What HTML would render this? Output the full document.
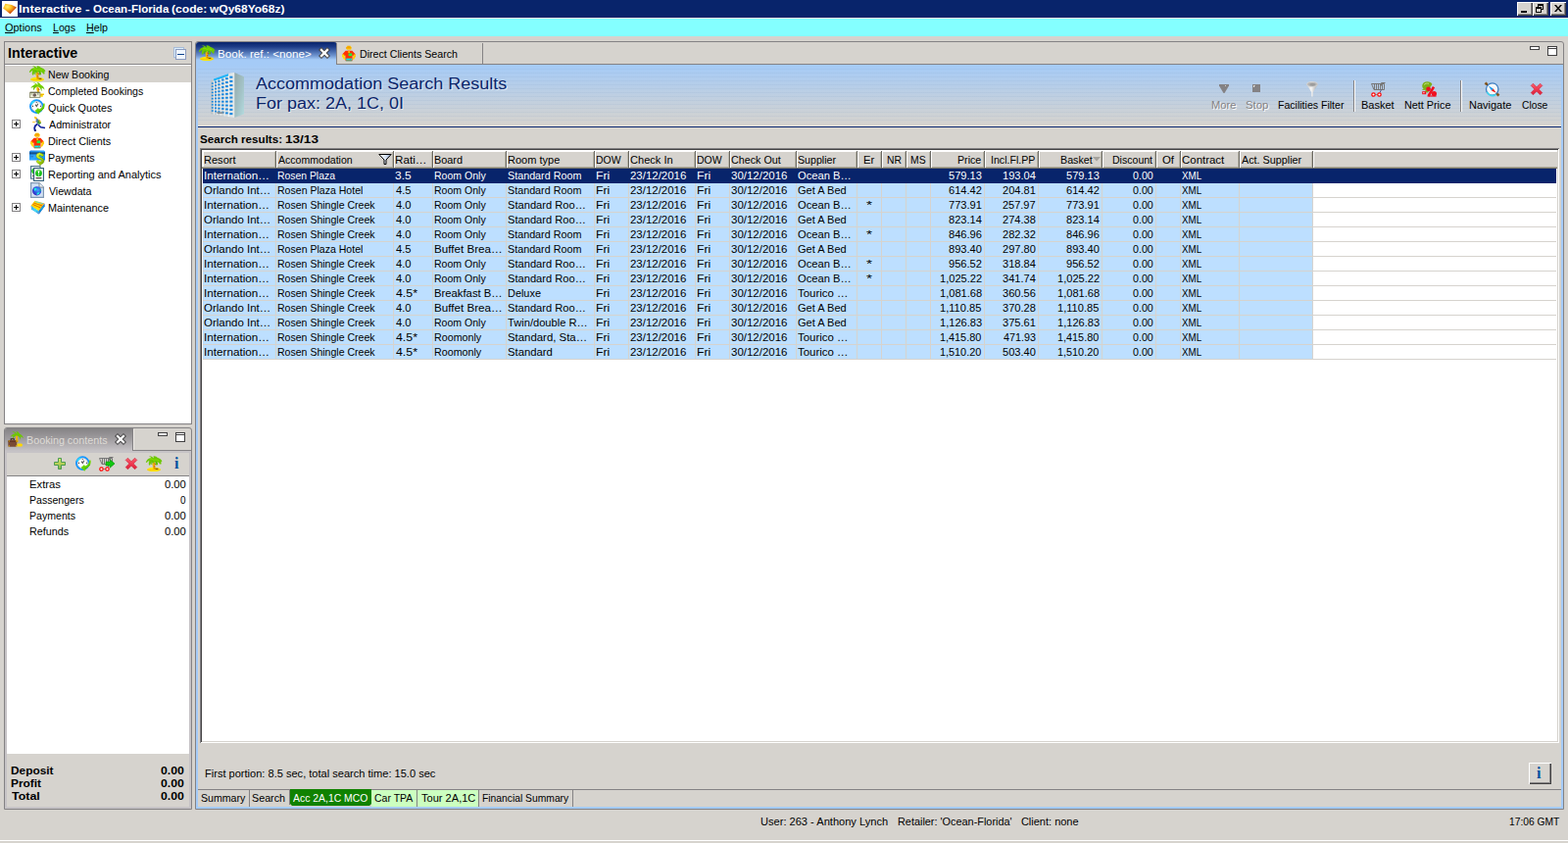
<!DOCTYPE html>
<html lang="en">
<head>
<meta charset="utf-8">
<title>Interactive - Ocean-Florida</title>
<style>
html,body{margin:0;padding:0;}
body{width:1600px;height:860px;overflow:hidden;background:#D6D3CE;font-family:"Liberation Sans",sans-serif;font-size:11px;line-height:13px;color:#000;}
#app{position:relative;width:1600px;height:860px;overflow:hidden;background:#D6D3CE;}
#app div,#app span.t,#app svg{position:absolute;}
#app svg{overflow:visible;}
.t{white-space:pre;transform-origin:0 0;}
.t u{text-decoration:underline;text-underline-offset:1px;}

</style>
</head>
<body>
<div id="app">
<div style="left:0px;top:0px;width:1600px;height:18px;background:#08246B;"></div>
<div style="left:2px;top:1px;width:16px;height:16px;background:#fff;"></div>
<svg style="left:2px;top:1px;" width="16" height="16" viewBox="0 0 16 16"><defs><radialGradient id="ggem" cx=".32" cy=".3" r=".8"><stop offset="0" stop-color="#FFF070"/><stop offset=".35" stop-color="#FFC020"/><stop offset=".7" stop-color="#D86010"/><stop offset="1" stop-color="#B03800"/></radialGradient></defs><path d="M3.400 2.800L10 4l5 2.600-6.600 6.600L1.200 7.400z" fill="url(#ggem)"/></svg>
<span class="t" style="left:18.81px;top:3px;font-weight:bold;transform:scaleX(1.170);color:#fff;">Interactive </span>
<span class="t" style="left:86.70px;top:3px;font-weight:bold;transform:scaleX(1.270);color:#fff;">- </span>
<span class="t" style="left:94.74px;top:3px;font-weight:bold;transform:scaleX(1.045);color:#fff;">Ocean-Florida </span>
<span class="t" style="left:174.87px;top:3px;font-weight:bold;transform:scaleX(1.100);color:#fff;">(code: </span>
<span class="t" style="left:213.89px;top:3px;font-weight:bold;transform:scaleX(1.090);color:#fff;">wQy68Yo68z)</span>
<div style="left:1548px;top:2px;width:16px;height:14px;background:#D6D3CE;box-shadow:inset 1px 1px 0 #fff,inset -1px -1px 0 #424142,inset -2px -2px 0 #848284;"></div>
<div style="left:1564px;top:2px;width:16px;height:14px;background:#D6D3CE;box-shadow:inset 1px 1px 0 #fff,inset -1px -1px 0 #424142,inset -2px -2px 0 #848284;"></div>
<div style="left:1582px;top:2px;width:16px;height:14px;background:#D6D3CE;box-shadow:inset 1px 1px 0 #fff,inset -1px -1px 0 #424142,inset -2px -2px 0 #848284;"></div>
<div style="left:1552px;top:11px;width:6px;height:2px;background:#000;"></div>
<div style="left:1569px;top:4px;width:6px;height:2px;background:#000;"></div>
<div style="left:1574px;top:4px;width:1px;height:6px;background:#000;"></div>
<div style="left:1569px;top:4px;width:1px;height:3px;background:#000;"></div>
<div style="left:1573px;top:9px;width:2px;height:1px;background:#000;"></div>
<div style="left:1567px;top:7px;width:6px;height:2px;background:#000;"></div>
<div style="left:1567px;top:7px;width:1px;height:6px;background:#000;"></div>
<div style="left:1572px;top:7px;width:1px;height:6px;background:#000;"></div>
<div style="left:1567px;top:12px;width:6px;height:1px;background:#000;"></div>
<svg style="left:1586px;top:5px;" width="8" height="7" viewBox="0 0 8 7"><path d="M0 0h2l2 2.500 2-2.500h2L5 3.500 8 7H6L4 4.500 2 7H0l3-3.500z" fill="#000"/></svg>
<div style="left:0px;top:18px;width:1600px;height:1px;background:#E7E3DE;"></div>
<div style="left:0px;top:19px;width:1600px;height:18px;background:#84FFFF;"></div>
<span class="t" style="left:4.90px;top:22px;transform:scaleX(0.995);"><u>O</u>ptions</span>
<span class="t" style="left:53.97px;top:22px;transform:scaleX(0.966);"><u>L</u>ogs</span>
<span class="t" style="left:88.08px;top:22px;transform:scaleX(0.974);"><u>H</u>elp</span>
<div style="left:4px;top:42px;width:192px;height:391px;border:1px solid #848284;box-sizing:border-box;"></div>
<div style="left:5px;top:66px;width:190px;height:366px;background:#fff;"></div>
<div style="left:5px;top:65px;width:190px;height:1px;background:#848284;"></div>
<div style="left:5px;top:67px;width:190px;height:17px;background:#D6D3CE;"></div>
<span class="t" style="left:7.94px;top:46px;font-size:14px;line-height:16px;font-weight:bold;transform:scaleX(1.018);">Interactive</span>
<div style="left:177px;top:48px;width:11px;height:11px;background:#DCEEFC;border:1px solid #A8BCD8;box-sizing:border-box;"></div>
<div style="left:179px;top:50px;width:11px;height:11px;background:#F0F6FE;border:1px solid #8C9CC0;box-sizing:border-box;"></div>
<div style="left:181px;top:55px;width:7px;height:1px;background:#08418C;"></div>
<span class="t" style="left:48.98px;top:70px;transform:scaleX(0.962);">New Booking</span>
<svg style="left:30px;top:67px;" width="16" height="16" viewBox="0 0 16 16"><ellipse cx="8" cy="13.9" rx="7" ry="2.1" fill="#FFE600"/>
<path d="M1.6 14.4h12.8" stroke="#F6C800" stroke-width="1" fill="none"/>
<path d="M7.9 5.5C7.3 8.2 7.9 10.6 8.5 13.6" stroke="#F2B400" stroke-width="2.3" fill="none"/>
<path d="M8.6 7.6l1.2 1.6M8 10.4l1.3.6M8.4 12.6l1 .4" stroke="#C85A00" stroke-width="1.1" fill="none"/>
<path d="M9.6 13.3h2.8" stroke="#6A3A00" stroke-width="1" fill="none"/>
<path d="M7.600 2.600C6.400.8 4.400 0 3.200.4c1 .4 1.800 1 2.400 1.800C3.400 1.800 1 3.200-.2 6.600c.4.400 1 .4 1.400 0 .6-.8 1.400-1.400 2.200-1.600-.6 1.200-.8 2.800-.4 4.400.6.400 1.200.2 1.400-.4.400-1.400 1-2.400 2-3.200l.2 1.400 1.600.2.400-1.600c.8.600 1.400 1.800 1.600 3.400.4.600 1.200.600 1.600-.2.200-1 .200-2-.2-3 1 .4 1.800 1.200 2.600 2.400.6.400 1.200.2 1.400-.4 0-.8-.2-1.400-.6-1.800h1c.4-.4.400-1 0-1.400-1-1.400-2.400-2.400-4-2.800C11 1 9.400 0 7.800.2c-.4.400-.4.800 0 1.200z" fill="#6CC800"/>
<path d="M4 3.200c1.600-.2 3 .2 4 1.200 1.600-.8 3.400-.6 5 .6" stroke="#8CE000" stroke-width="1" fill="none"/>
<path d="M6.400 5.800c-.6 1-.8 2-.6 3M10 6c.8.800 1.200 1.800 1.200 3" stroke="#48B000" stroke-width="1" fill="none"/></svg>
<span class="t" style="left:48.95px;top:87px;transform:scaleX(0.958);">Completed Bookings</span>
<svg style="left:30px;top:84px;" width="16" height="16" viewBox="0 0 16 16"><g transform="translate(1.2,-0.6) scale(0.92)">
<path d="M7.9 5.5C7.3 8.2 7.9 9.6 8.7 11.6" stroke="#F2B400" stroke-width="2.3" fill="none"/>
<path d="M8.600 7.600l1.200 1.600" stroke="#C85A00" stroke-width="1.300" fill="none"/>
<path d="M8 3.600C6.200 1.200 3.600.4 2.600 1c1.600.4 2.800 1.200 3.600 2.400C3.800 3 1.400 4.600.2 7.200c1.200-.8 2.200-1.200 3.400-1.400C3 6.800 2.800 8.200 3.200 9.600c.6-1.600 1.600-2.800 3-3.600.6-.2 1.200-.4 1.800-.4.800 0 1.600.4 2.200 1 1 1 1.600 2.400 1.800 4 .6-1.400.6-2.800.2-4 1.200.4 2.400 1.200 3.400 2.400C15.200 6.400 13.600 4.400 11.400 3.600 10.400 1.800 8.800.6 7 .4c.8.800 1.200 1.800 1 3.200z" fill="#6CC800"/>
<path d="M4 3.200c1.600-.2 3 .2 4 1.200 1.600-.8 3.400-.6 5 .6" stroke="#8CE000" stroke-width="1" fill="none"/></g>
<path d="M10.400 11.500h4.600v1.500h-1.200v1.800H9.800z" fill="#FFD800"/>
<path d="M11 12.500h3.600" stroke="#E8A800" stroke-width=".8"/>
<rect x=".5" y="10.300" width="10.400" height="5.200" fill="#ECECD8" stroke="#9C9C80" stroke-width="1"/>
<path d="M1 10.300h9.600" stroke="#6E6E50" stroke-width="1.200"/>
<circle cx="5.300" cy="13" r="1.800" fill="#6E5E5A"/>
<path d="M1.600 12h1M8 12h1.400" stroke="#6E7E50" stroke-width="1"/></svg>
<span class="t" style="left:48.92px;top:104px;transform:scaleX(0.980);">Quick Quotes</span>
<svg style="left:30px;top:101px;" width="16" height="16" viewBox="0 0 16 16"><circle cx="7.300" cy="7.600" r="6.300" fill="#fff" stroke="#1496FF" stroke-width="2"/>
<circle cx="7.300" cy="7.600" r="4.900" fill="none" stroke="#D8C8C8" stroke-width=".9"/>
<path d="M5.400 2.100A5.600 5.600 0 0 0 1.900 5.600" stroke="#30D8FF" stroke-width="1.800" fill="none"/>
<path d="M7.300 3.200v.9M7.300 11v.8M3.100 7.400h.9M11 7.400h.8" stroke="#333" stroke-width="1.100"/>
<path d="M6 5.600l1.400 1.900 1.400-2.700" stroke="#555" stroke-width="1.100" fill="none"/>
<path d="M15.500 4.500c.7 3.400-.9 6.400-4 8l-2.300 3.300-3.500-3.700c1.300-1.400 2.300-2.400 3.200-3.200l1 1.700c2.300-.8 4.200-3 4.400-6.200z" fill="#66D400"/>
<path d="M9.300 12.800c2.200-.3 4.300-1.700 5.400-4" stroke="#4AB800" stroke-width="1" fill="none"/></svg>
<span class="t" style="left:49.84px;top:121px;transform:scaleX(0.975);">Administrator</span>
<div style="left:12px;top:122px;width:9px;height:9px;background:#fff;border:1px solid #848284;box-sizing:border-box;"></div>
<div style="left:14px;top:126px;width:5px;height:1px;background:#000;"></div>
<div style="left:16px;top:124px;width:1px;height:5px;background:#000;"></div>
<svg style="left:30px;top:118px;" width="16" height="16" viewBox="0 0 16 16"><path d="M5 .8l2.400.8 1 1.800-1.200.8L5.400 3z" fill="#FFC21E"/>
<path d="M7.400 2.600l2.400 1.600 1.200 3.200-2.400 1.400-2.200-3z" fill="#5E78B0"/>
<path d="M8.600 4.400l2.600 1.200.8 2.200-1.800 1.200-1.800-1.200z" fill="#3E9A2E"/>
<path d="M9.400 3.800l1.400 1.400.4 2" stroke="#F0B820" stroke-width="1.100" fill="none"/>
<path d="M3.200 6.600h2.400l1-.8" stroke="#FFC21E" stroke-width="1" fill="none"/>
<path d="M8.400 8.600L6 10.200l-.8 2.400.4 2.600" stroke="#10209A" stroke-width="1.800" fill="none" stroke-linejoin="round"/>
<path d="M9 9.200l2.600 2.600 4.400.6" stroke="#10209A" stroke-width="1.500" fill="none"/>
<rect x="5" y="14.300" width="2" height="1.700" fill="#0A1480"/></svg>
<span class="t" style="left:48.95px;top:138px;transform:scaleX(0.980);">Direct Clients</span>
<svg style="left:30px;top:135px;" width="16" height="16" viewBox="0 0 16 16"><path d="M6.200.8h3.400l1.200 1.600-.6 2.400H6.400L5 3.600z" fill="#FFC800"/>
<path d="M5.200 2.800h5" stroke="#F09000" stroke-width="1"/>
<path d="M6.600 1.400h2.600" stroke="#F0A000" stroke-width=".9"/>
<rect x="7" y="4.700" width="2" height="1.300" fill="#F0C080"/>
<path d="M4.600 5.800h6.800l3.200 3.400-1.200 2.200-1.800-1v5.400H4.400v-5.400l-1.800 1-1.200-2.200z" fill="#FF3200"/>
<path d="M1.200 9.400l2 .2 1.200 5.200-1.600-.2L1 11.400z" fill="#FFDC00"/>
<path d="M14.800 9.400l-2 .2-1.200 5.200 1.600-.2 1.800-3.200z" fill="#FFC800"/>
<path d="M7.400 6h1.400v2H7.400z" fill="#FFD800"/>
<rect x="7.600" y="8.400" width="3.600" height="2.700" fill="#20F040"/>
<rect x="5.200" y="13.600" width="5.800" height="2" fill="#00F0F0"/>
<path d="M4.800 15.900h6.600" stroke="#5A8A50" stroke-width=".9"/>
<path d="M9.600 13.600v2.200" stroke="#60A080" stroke-width=".8"/></svg>
<span class="t" style="left:48.98px;top:155px;transform:scaleX(0.974);">Payments</span>
<div style="left:12px;top:156px;width:9px;height:9px;background:#fff;border:1px solid #848284;box-sizing:border-box;"></div>
<div style="left:14px;top:160px;width:5px;height:1px;background:#000;"></div>
<div style="left:16px;top:158px;width:1px;height:5px;background:#000;"></div>
<svg style="left:30px;top:152px;" width="16" height="16" viewBox="0 0 16 16"><defs><linearGradient id="gcard" x1="0" y1="0" x2="1" y2="1"><stop offset="0" stop-color="#1E7EE0"/><stop offset=".5" stop-color="#30A8FF"/><stop offset="1" stop-color="#0A8CF0"/></linearGradient>
<linearGradient id="gdol" x1="0" y1="0" x2="1" y2="1"><stop offset="0" stop-color="#F4FF60"/><stop offset=".45" stop-color="#B8E800"/><stop offset="1" stop-color="#6A9A00"/></linearGradient></defs>
<path d="M1.200 1.400h13.600l1.200 1v9.200H0V2.400z" fill="url(#gcard)"/>
<rect x="0" y="3.300" width="16" height="2.100" fill="#12508C"/>
<path d="M1.400 7.800h2.600" stroke="#2A70C0" stroke-width="1"/>
<path d="M10.400 3.400l1 .8c1.600.2 2.800 1 3.400 2.400l-1.800 1.200c-.8-1-1.800-1.400-2.800-1.200-.6.200-.6.800 0 1.200l2.800 1.400c1.600.8 2.400 2.200 1.800 4-.4 1.200-1.400 2-2.800 2.200l-.6 1.200-1.400-.4.400-1c-1.600-.4-2.800-1.400-3.400-2.800l1.800-1.200c.8 1.200 1.800 1.800 3 1.600.8-.2 1-1 .2-1.600L9 9.800C7.200 8.800 6.600 7.400 7.200 5.800c.4-1 1.200-1.600 2.600-1.800z" fill="url(#gdol)" stroke="#5C7C00" stroke-width=".4"/></svg>
<span class="t" style="left:48.96px;top:172px;">Reporting and Analytics</span>
<div style="left:12px;top:173px;width:9px;height:9px;background:#fff;border:1px solid #848284;box-sizing:border-box;"></div>
<div style="left:14px;top:177px;width:5px;height:1px;background:#000;"></div>
<div style="left:16px;top:175px;width:1px;height:5px;background:#000;"></div>
<svg style="left:30px;top:169px;" width="16" height="16" viewBox="0 0 16 16"><rect x="1.600" y=".600" width="9.400" height="12.600" fill="#fff" stroke="#48708C" stroke-width="1.100"/>
<circle cx="5" cy="5.600" r="2.800" fill="#20C820"/>
<path d="M3 10.400h3" stroke="#705040" stroke-width="1"/>
<rect x="4.600" y="2.600" width="9.800" height="12.800" fill="#fff" stroke="#2E5A78" stroke-width="1.100"/>
<circle cx="9.500" cy="7.700" r="3.400" fill="#18C018"/>
<path d="M7.400 6a3.200 3.200 0 0 1 4.200 0" stroke="#70E060" stroke-width="1" fill="none"/>
<path d="M9.500 5.200v3" stroke="#fff" stroke-width="1.200"/>
<circle cx="9.500" cy="9.600" r=".700" fill="#fff"/>
<path d="M6.600 12.700h5.800" stroke="#3A2A28" stroke-width="1.100"/></svg>
<span class="t" style="left:49.83px;top:189px;transform:scaleX(0.962);">Viewdata</span>
<svg style="left:30px;top:186px;" width="16" height="16" viewBox="0 0 16 16"><defs><radialGradient id="gglobe" cx=".6" cy=".4" r=".7"><stop offset="0" stop-color="#50A0FF"/><stop offset=".55" stop-color="#2858E0"/><stop offset="1" stop-color="#4810B0"/></radialGradient></defs>
<path d="M1.600.700h8.400l4.400 4.400v10.200H1.600z" fill="#D2E2F4" stroke="#8098B4" stroke-width="1.200"/>
<path d="M10 .700v4.400h4.400" fill="#F0F4FA" stroke="#80888C" stroke-width="1"/>
<circle cx="7.600" cy="8.800" r="4.600" fill="url(#gglobe)"/>
<path d="M5 6c1.200-.6 2.200-.4 2.600.4-.2 1-1 1.800-2.200 2.400-.6-.8-.8-1.800-.4-2.800zM7.800 11c.8-.8 1.800-1 2.800-.4-.4 1.200-1.600 2.200-2.800 2.400-.4-.6-.4-1.400 0-2z" fill="#20F0E0"/>
<path d="M10.400 6c.8.600 1.400 1.600 1.600 2.800l-1.200.4z" fill="#20B0A0"/></svg>
<span class="t" style="left:48.96px;top:206px;transform:scaleX(0.985);">Maintenance</span>
<div style="left:12px;top:207px;width:9px;height:9px;background:#fff;border:1px solid #848284;box-sizing:border-box;"></div>
<div style="left:14px;top:211px;width:5px;height:1px;background:#000;"></div>
<div style="left:16px;top:209px;width:1px;height:5px;background:#000;"></div>
<svg style="left:30px;top:203px;" width="16" height="16" viewBox="0 0 16 16"><defs><linearGradient id="gbk1" x1="0" y1="0" x2="1" y2="0"><stop offset="0" stop-color="#FFC400"/><stop offset=".5" stop-color="#FFE800"/><stop offset="1" stop-color="#FF9A00"/></linearGradient>
<linearGradient id="gbk2" x1="0" y1="0" x2="1" y2="1"><stop offset="0" stop-color="#1E7EE0"/><stop offset=".6" stop-color="#18C8F0"/><stop offset="1" stop-color="#0838B0"/></linearGradient></defs>
<path d="M1.600 6.800L9.400 12l.4 3.600L2 10.400z" fill="url(#gbk2)"/>
<path d="M9.400 12l6-7.600.2 3.200-5.800 8z" fill="#0C3CB8"/>
<path d="M10 12.600l5-6.400M10 14l5.200-6.800" stroke="#20E0F0" stroke-width=".7" fill="none"/>
<path d="M5.600 1.800l9.800 2.600-6 7.600L1.600 6.800z" fill="url(#gbk1)"/>
<path d="M4.400 4l8.600 3M3.400 5.400l7.800 3.600" stroke="#E06000" stroke-width=".9" fill="none"/>
<path d="M6 2.600l8.400 2.400" stroke="#60D0E8" stroke-width=".9" fill="none"/>
<path d="M2 8l7.600 5M2.200 9.400l7.400 5" stroke="#70E8FF" stroke-width=".7" fill="none"/></svg>
<div style="left:4px;top:436px;width:192px;height:390px;border:1px solid #848284;box-sizing:border-box;border-radius:3px 3px 0 0;"></div>
<div style="left:5px;top:460px;width:190px;height:365px;border:2px solid #C6C3C6;box-sizing:border-box;"></div>
<div style="left:5px;top:437px;width:131px;height:25px;background:linear-gradient(#858385,#A09DA0 45%,#C6C3C6 92%);border-radius:2px 0 0 0;"></div>
<div style="left:135px;top:438px;width:1px;height:22px;background:#848284;"></div>
<div style="left:136px;top:438px;width:1px;height:21px;background:#EFEBE7;"></div>
<div style="left:136px;top:459px;width:59px;height:1px;background:#848284;"></div>
<svg style="left:8px;top:440px;" width="16" height="16" viewBox="0 0 16 16"><g transform="translate(2.400,-0.400) scale(0.86)">
<path d="M7.900 5.500C7.300 8.200 7.900 10.600 8.500 13.600" stroke="#F2B400" stroke-width="2.300" fill="none"/>
<path d="M8 3.600C6.200 1.200 3.600.4 2.600 1c1.600.4 2.800 1.200 3.600 2.400C3.800 3 1.400 4.600.2 7.200c1.200-.8 2.200-1.200 3.400-1.400C3 6.800 2.800 8.200 3.200 9.600c.6-1.600 1.600-2.800 3-3.600.6-.2 1.200-.4 1.800-.4.800 0 1.600.4 2.200 1 1 1 1.600 2.400 1.800 4 .6-1.400.6-2.800.2-4 1.200.4 2.400 1.200 3.400 2.400C15.200 6.400 13.600 4.400 11.400 3.600 10.400 1.800 8.800.6 7 .4c.8.800 1.200 1.800 1 3.200z" fill="#6CC800"/></g>
<path d="M9.400 12.600h4.400l1.200 1-.6 1.800h-5z" fill="#FFD800"/>
<path d="M3.200 9v-1.200h3V9" stroke="#3A2418" stroke-width="1.100" fill="none"/>
<rect x=".3" y="9" width="8.900" height="6.800" rx=".8" fill="#7A4A34"/>
<path d="M.3 10.400h8.900" stroke="#5A3020" stroke-width=".8"/>
<path d="M.8 9.400h1v1h-1zM8 9.400h1v1h-1zM.8 14.600h1v1h-1zM8 14.600h1v1h-1z" fill="#FFD000"/></svg>
<span class="t" style="left:26.98px;top:443px;transform:scaleX(0.978);color:#DEDBD6;">Booking contents</span>
<svg style="left:118px;top:443px;" width="10" height="10" viewBox="0 0 10 10"><path d="M2 2l6 6M8 2l-6 6" fill="none" stroke="#424142" stroke-width="4.200" stroke-linecap="square"/><path d="M2 2l6 6M8 2l-6 6" fill="none" stroke="#fff" stroke-width="2.300" stroke-linecap="square"/></svg>
<div style="left:161px;top:441px;width:10px;height:4px;background:#fff;border:1px solid #424142;box-sizing:border-box;"></div>
<div style="left:179px;top:441px;width:10px;height:10px;background:#fff;border:1px solid #424142;box-sizing:border-box;"></div>
<div style="left:180px;top:443px;width:8px;height:1px;background:#424142;"></div>
<div style="left:7px;top:485px;width:186px;height:1px;background:#848284;"></div>
<svg style="left:55px;top:467px;" width="12" height="12" viewBox="0 0 12 12"><defs><linearGradient id="gpl" x1="0" y1="0" x2="0" y2="1"><stop offset="0" stop-color="#D8E870"/><stop offset=".5" stop-color="#B8D058"/><stop offset="1" stop-color="#78B050"/></linearGradient></defs>
<path d="M4.500.5h3v4h4v3h-4v4h-3v-4h-4v-3h4z" fill="url(#gpl)" stroke="#4C9C50" stroke-width="1" stroke-linejoin="miter"/></svg>
<svg style="left:77px;top:465px;" width="16" height="16" viewBox="0 0 16 16"><circle cx="7.300" cy="7.600" r="6.300" fill="#fff" stroke="#1496FF" stroke-width="2"/>
<circle cx="7.300" cy="7.600" r="4.900" fill="none" stroke="#D8C8C8" stroke-width=".9"/>
<path d="M5.400 2.100A5.600 5.600 0 0 0 1.900 5.600" stroke="#30D8FF" stroke-width="1.800" fill="none"/>
<path d="M7.300 3.200v.9M7.300 11v.8M3.100 7.400h.9M11 7.400h.8" stroke="#333" stroke-width="1.100"/>
<path d="M6 5.600l1.400 1.900 1.400-2.700" stroke="#555" stroke-width="1.100" fill="none"/>
<path d="M15.500 4.500c.7 3.400-.9 6.400-4 8l-2.300 3.300-3.500-3.700c1.300-1.400 2.300-2.400 3.200-3.200l1 1.700c2.300-.8 4.200-3 4.400-6.200z" fill="#66D400"/>
<path d="M9.300 12.800c2.200-.3 4.300-1.700 5.400-4" stroke="#4AB800" stroke-width="1" fill="none"/></svg>
<svg style="left:101px;top:465px;" width="16" height="16" viewBox="0 0 16 16"><path d="M10.500 4.500V1.500h4" stroke="#777" stroke-width="1" fill="none"/>
<path d="M.5 2.500h13v6H3z" fill="none" stroke="#777" stroke-width="1"/>
<path d="M3.500 3v5M5.500 3v5M7.500 3v5M9.500 3v5M11.500 3v5" stroke="#777" stroke-width="1"/>
<path d="M10.500 8.500l-1.500 3" stroke="#558" stroke-width="1" fill="none"/>
<path d="M3.500 13.500h5" stroke="#888" stroke-width="1"/>
<circle cx="2.500" cy="13.500" r="1.700" fill="#fff" stroke="#F00" stroke-width="1.200"/>
<circle cx="8.500" cy="13.500" r="1.700" fill="#fff" stroke="#F00" stroke-width="1.200"/><path d="M7 6h4.200V3.800L16 8l-4.800 4.200V10H7z" fill="#10C810" stroke="#0A8A0A" stroke-width=".6"/></svg>
<svg style="left:127.5px;top:467px;" width="12" height="12" viewBox="0 0 12 12"><defs><linearGradient id="grx" x1="0" y1="0" x2="0" y2="1"><stop offset="0" stop-color="#F86070"/><stop offset=".5" stop-color="#F03850"/><stop offset="1" stop-color="#D82038"/></linearGradient></defs>
<path d="M2.400.2L6 3.800 9.600.2l2.200 2.200L8.200 6l3.600 3.600-2.200 2.200L6 8.200l-3.600 3.600L.2 9.600 3.800 6 .2 2.400z" fill="url(#grx)" stroke="#D02038" stroke-width=".6" stroke-linejoin="round"/></svg>
<svg style="left:149px;top:465px;" width="16" height="16" viewBox="0 0 16 16"><ellipse cx="8" cy="13.9" rx="7" ry="2.1" fill="#FFE600"/>
<path d="M1.6 14.4h12.8" stroke="#F6C800" stroke-width="1" fill="none"/>
<path d="M7.9 5.5C7.3 8.2 7.9 10.6 8.5 13.6" stroke="#F2B400" stroke-width="2.3" fill="none"/>
<path d="M8.6 7.6l1.2 1.6M8 10.4l1.3.6M8.4 12.6l1 .4" stroke="#C85A00" stroke-width="1.1" fill="none"/>
<path d="M9.6 13.3h2.8" stroke="#6A3A00" stroke-width="1" fill="none"/>
<path d="M7.600 2.600C6.400.8 4.400 0 3.200.4c1 .4 1.800 1 2.400 1.800C3.400 1.800 1 3.200-.2 6.600c.4.400 1 .4 1.400 0 .6-.8 1.400-1.400 2.200-1.600-.6 1.200-.8 2.800-.4 4.400.6.400 1.200.2 1.400-.4.400-1.400 1-2.400 2-3.200l.2 1.400 1.600.2.400-1.600c.8.600 1.400 1.800 1.600 3.400.4.600 1.200.600 1.600-.2.200-1 .200-2-.2-3 1 .4 1.800 1.200 2.600 2.400.6.400 1.200.2 1.400-.4 0-.8-.2-1.400-.6-1.800h1c.4-.4.400-1 0-1.400-1-1.400-2.400-2.400-4-2.800C11 1 9.400 0 7.800.2c-.4.400-.4.800 0 1.200z" fill="#6CC800"/>
<path d="M4 3.200c1.600-.2 3 .2 4 1.200 1.600-.8 3.400-.6 5 .6" stroke="#8CE000" stroke-width="1" fill="none"/>
<path d="M6.400 5.800c-.6 1-.8 2-.6 3M10 6c.8.800 1.200 1.800 1.200 3" stroke="#48B000" stroke-width="1" fill="none"/></svg>
<span class="t" style="left:177.98px;top:463px;font-size:16px;line-height:20px;font-weight:bold;color:#0050A0;font-family:'Liberation Serif',serif;">i</span>
<div style="left:7px;top:486px;width:186px;height:283px;background:#fff;"></div>
<span class="t" style="left:29.93px;top:488px;transform:scaleX(1.023);">Extras</span>
<span class="t" style="left:167.73px;top:488px;transform:scaleX(1.020);">0.00</span>
<span class="t" style="left:30.00px;top:504px;transform:scaleX(0.960);">Passengers</span>
<span class="t" style="left:183.76px;top:504px;transform:scaleX(0.900);">0</span>
<span class="t" style="left:29.99px;top:520px;transform:scaleX(0.963);">Payments</span>
<span class="t" style="left:167.73px;top:520px;transform:scaleX(1.020);">0.00</span>
<span class="t" style="left:29.97px;top:536px;transform:scaleX(0.981);">Refunds</span>
<span class="t" style="left:167.73px;top:536px;transform:scaleX(1.020);">0.00</span>
<span class="t" style="left:10.91px;top:780px;font-weight:bold;transform:scaleX(1.078);">Deposit</span>
<span class="t" style="left:163.72px;top:780px;font-weight:bold;transform:scaleX(1.112);">0.00</span>
<span class="t" style="left:10.90px;top:793px;font-weight:bold;transform:scaleX(1.081);">Profit</span>
<span class="t" style="left:163.72px;top:793px;font-weight:bold;transform:scaleX(1.112);">0.00</span>
<span class="t" style="left:11.98px;top:806px;font-weight:bold;transform:scaleX(1.129);">Total</span>
<span class="t" style="left:163.72px;top:806px;font-weight:bold;transform:scaleX(1.112);">0.00</span>
<div style="left:199px;top:42px;width:1397px;height:784px;border:1px solid #848284;box-sizing:border-box;border-radius:3px 3px 0 0;"></div>
<div style="left:200px;top:66px;width:1395px;height:759px;border:2px solid #A5CBF7;border-top:none;box-sizing:border-box;"></div>
<div style="left:344px;top:65px;width:1251px;height:1px;background:#848284;"></div>
<div style="left:200px;top:43px;width:144px;height:23px;background:linear-gradient(#08246B 0,#1B3A86 20%,#6F95D0 60%,#A5CBF7 78%);border-radius:3px 3px 0 0;"></div>
<svg style="left:203px;top:46px;" width="16" height="16" viewBox="0 0 16 16"><ellipse cx="8" cy="13.9" rx="7" ry="2.1" fill="#FFE600"/>
<path d="M1.6 14.4h12.8" stroke="#F6C800" stroke-width="1" fill="none"/>
<path d="M7.9 5.5C7.3 8.2 7.9 10.6 8.5 13.6" stroke="#F2B400" stroke-width="2.3" fill="none"/>
<path d="M8.6 7.6l1.2 1.6M8 10.4l1.3.6M8.4 12.6l1 .4" stroke="#C85A00" stroke-width="1.1" fill="none"/>
<path d="M9.6 13.3h2.8" stroke="#6A3A00" stroke-width="1" fill="none"/>
<path d="M7.600 2.600C6.400.8 4.400 0 3.200.4c1 .4 1.800 1 2.400 1.800C3.400 1.800 1 3.200-.2 6.600c.4.400 1 .4 1.400 0 .6-.8 1.400-1.400 2.200-1.600-.6 1.200-.8 2.800-.4 4.400.6.400 1.200.2 1.400-.4.400-1.400 1-2.400 2-3.200l.2 1.400 1.600.2.400-1.600c.8.600 1.400 1.800 1.600 3.400.4.600 1.200.600 1.600-.2.200-1 .200-2-.2-3 1 .4 1.800 1.200 2.600 2.400.6.400 1.200.2 1.400-.4 0-.8-.2-1.400-.6-1.800h1c.4-.4.400-1 0-1.400-1-1.400-2.400-2.400-4-2.800C11 1 9.400 0 7.800.2c-.4.400-.4.800 0 1.200z" fill="#6CC800"/>
<path d="M4 3.200c1.600-.2 3 .2 4 1.200 1.600-.8 3.400-.6 5 .6" stroke="#8CE000" stroke-width="1" fill="none"/>
<path d="M6.400 5.800c-.6 1-.8 2-.6 3M10 6c.8.800 1.200 1.800 1.200 3" stroke="#48B000" stroke-width="1" fill="none"/></svg>
<span class="t" style="left:221.99px;top:49px;transform:scaleX(1.058);color:#fff;">Book. ref.: &lt;none&gt;</span>
<svg style="left:326px;top:49px;" width="10" height="10" viewBox="0 0 10 10"><path d="M2 2l6 6M8 2l-6 6" fill="none" stroke="#424142" stroke-width="4.200" stroke-linecap="square"/><path d="M2 2l6 6M8 2l-6 6" fill="none" stroke="#fff" stroke-width="2.300" stroke-linecap="square"/></svg>
<div style="left:343px;top:44px;width:1px;height:22px;background:#848284;"></div>
<div style="left:492px;top:44px;width:1px;height:21px;background:#848284;"></div>
<svg style="left:348px;top:46px;" width="16" height="16" viewBox="0 0 16 16"><path d="M6.200.8h3.400l1.200 1.600-.6 2.400H6.400L5 3.600z" fill="#FFC800"/>
<path d="M5.200 2.800h5" stroke="#F09000" stroke-width="1"/>
<path d="M6.600 1.400h2.600" stroke="#F0A000" stroke-width=".9"/>
<rect x="7" y="4.700" width="2" height="1.300" fill="#F0C080"/>
<path d="M4.600 5.800h6.800l3.200 3.400-1.200 2.200-1.800-1v5.400H4.400v-5.400l-1.800 1-1.200-2.200z" fill="#FF3200"/>
<path d="M1.200 9.400l2 .2 1.200 5.200-1.600-.2L1 11.400z" fill="#FFDC00"/>
<path d="M14.800 9.400l-2 .2-1.200 5.200 1.600-.2 1.800-3.200z" fill="#FFC800"/>
<path d="M7.400 6h1.400v2H7.400z" fill="#FFD800"/>
<rect x="7.600" y="8.400" width="3.600" height="2.700" fill="#20F040"/>
<rect x="5.200" y="13.600" width="5.800" height="2" fill="#00F0F0"/>
<path d="M4.800 15.900h6.600" stroke="#5A8A50" stroke-width=".9"/>
<path d="M9.600 13.600v2.200" stroke="#60A080" stroke-width=".8"/></svg>
<span class="t" style="left:366.97px;top:49px;transform:scaleX(0.968);">Direct Clients Search</span>
<div style="left:1561px;top:47px;width:10px;height:4px;background:#fff;border:1px solid #424142;box-sizing:border-box;"></div>
<div style="left:1579px;top:47px;width:10px;height:10px;background:#fff;border:1px solid #424142;box-sizing:border-box;"></div>
<div style="left:1580px;top:49px;width:8px;height:1px;background:#424142;"></div>
<div style="left:202px;top:66px;width:1391px;height:62px;background:linear-gradient(#A5CBF7,#D6D3CE);"></div>
<div style="left:202px;top:68px;width:1391px;height:58px;background:repeating-linear-gradient(to bottom,rgba(255,255,255,0) 0,rgba(255,255,255,0) 2px,rgba(120,150,190,.10) 2px,rgba(120,150,190,.10) 3px,rgba(255,255,255,0) 3px,rgba(255,255,255,0) 4px);"></div>
<div style="left:202px;top:128px;width:1391px;height:1px;background:#E7E3DE;"></div>
<div style="left:202px;top:129px;width:1391px;height:1px;background:#08246B;"></div>
<svg style="left:215px;top:73px;" width="34" height="48" viewBox="0 0 34 48"><defs><linearGradient id="gbs" x1="0" y1="0" x2="1" y2="1"><stop offset="0" stop-color="#94A8A8"/><stop offset=".6" stop-color="#A4C4C8"/><stop offset="1" stop-color="#B4DCE0"/></linearGradient><linearGradient id="gbf" x1="0" y1="0" x2="1" y2="0"><stop offset="0" stop-color="#BCC4C8"/><stop offset="1" stop-color="#E8ECEC"/></linearGradient></defs><path d="M24.200 1L34 5.200V43.200L24.200 47z" fill="url(#gbs)"/><path d="M0 9L18.400 2.400V1.800L24.200 1V47L0 43.200z" fill="url(#gbf)"/><path d="M3 7.600L18 2.200v2.200L3 10z" fill="#20B4F8"/><path d="M3.3 9.4V43.7" stroke="#F4F6F6" stroke-width=".9"/><path d="M6.6 8.3V44.2" stroke="#F4F6F6" stroke-width=".9"/><path d="M10.2 7.1V44.8" stroke="#F4F6F6" stroke-width=".9"/><path d="M14.2 5.8V45.4" stroke="#F4F6F6" stroke-width=".9"/><path d="M18.4 4.4V46.1" stroke="#F4F6F6" stroke-width=".9"/><rect x="0.8" y="11.3" width="1.9" height="1.5" fill="#1888E0"/><rect x="0.8" y="14.4" width="1.9" height="1.5" fill="#1888E0"/><rect x="0.8" y="17.5" width="1.9" height="1.5" fill="#1888E0"/><rect x="0.8" y="20.6" width="1.9" height="1.5" fill="#1888E0"/><rect x="0.8" y="23.7" width="1.9" height="1.5" fill="#1888E0"/><rect x="0.8" y="26.9" width="1.9" height="1.5" fill="#1888E0"/><rect x="0.8" y="30.0" width="1.9" height="1.5" fill="#1888E0"/><rect x="0.8" y="33.1" width="1.9" height="1.5" fill="#1888E0"/><rect x="0.8" y="36.2" width="1.9" height="1.5" fill="#1888E0"/><rect x="0.8" y="39.3" width="1.9" height="1.5" fill="#1888E0"/><rect x="4.1" y="10.1" width="2.0" height="1.6" fill="#1888E0"/><rect x="4.1" y="13.4" width="2.0" height="1.6" fill="#1888E0"/><rect x="4.1" y="16.7" width="2.0" height="1.6" fill="#1888E0"/><rect x="4.1" y="20.0" width="2.0" height="1.6" fill="#1888E0"/><rect x="4.1" y="23.3" width="2.0" height="1.6" fill="#1888E0"/><rect x="4.1" y="26.6" width="2.0" height="1.6" fill="#1888E0"/><rect x="4.1" y="29.9" width="2.0" height="1.6" fill="#1888E0"/><rect x="4.1" y="33.2" width="2.0" height="1.6" fill="#1888E0"/><rect x="4.1" y="36.5" width="2.0" height="1.6" fill="#1888E0"/><rect x="4.1" y="39.8" width="2.0" height="1.6" fill="#1888E0"/><rect x="7.3" y="9.0" width="2.3" height="1.7" fill="#1888E0"/><rect x="7.3" y="12.4" width="2.3" height="1.7" fill="#1888E0"/><rect x="7.3" y="15.9" width="2.3" height="1.7" fill="#1888E0"/><rect x="7.3" y="19.4" width="2.3" height="1.7" fill="#1888E0"/><rect x="7.3" y="22.9" width="2.3" height="1.7" fill="#1888E0"/><rect x="7.3" y="26.4" width="2.3" height="1.7" fill="#1888E0"/><rect x="7.3" y="29.8" width="2.3" height="1.7" fill="#1888E0"/><rect x="7.3" y="33.3" width="2.3" height="1.7" fill="#1888E0"/><rect x="7.3" y="36.8" width="2.3" height="1.7" fill="#1888E0"/><rect x="7.3" y="40.3" width="2.3" height="1.7" fill="#1888E0"/><rect x="11.0" y="7.6" width="2.6" height="1.8" fill="#1888E0"/><rect x="11.0" y="11.3" width="2.6" height="1.8" fill="#1888E0"/><rect x="11.0" y="15.0" width="2.6" height="1.8" fill="#1888E0"/><rect x="11.0" y="18.7" width="2.6" height="1.8" fill="#1888E0"/><rect x="11.0" y="22.4" width="2.6" height="1.8" fill="#1888E0"/><rect x="11.0" y="26.1" width="2.6" height="1.8" fill="#1888E0"/><rect x="11.0" y="29.8" width="2.6" height="1.8" fill="#1888E0"/><rect x="11.0" y="33.5" width="2.6" height="1.8" fill="#1888E0"/><rect x="11.0" y="37.1" width="2.6" height="1.8" fill="#1888E0"/><rect x="11.0" y="40.8" width="2.6" height="1.8" fill="#1888E0"/><rect x="15.0" y="6.2" width="2.8" height="1.9" fill="#1888E0"/><rect x="15.0" y="10.1" width="2.8" height="1.9" fill="#1888E0"/><rect x="15.0" y="14.1" width="2.8" height="1.9" fill="#1888E0"/><rect x="15.0" y="18.0" width="2.8" height="1.9" fill="#1888E0"/><rect x="15.0" y="21.9" width="2.8" height="1.9" fill="#1888E0"/><rect x="15.0" y="25.8" width="2.8" height="1.9" fill="#1888E0"/><rect x="15.0" y="29.7" width="2.8" height="1.9" fill="#1888E0"/><rect x="15.0" y="33.6" width="2.8" height="1.9" fill="#1888E0"/><rect x="15.0" y="37.5" width="2.8" height="1.9" fill="#1888E0"/><rect x="15.0" y="41.4" width="2.8" height="1.9" fill="#1888E0"/><rect x="19.3" y="4.7" width="3.1" height="2.0" fill="#1888E0"/><rect x="19.3" y="8.9" width="3.1" height="2.0" fill="#1888E0"/><rect x="19.3" y="13.0" width="3.1" height="2.0" fill="#1888E0"/><rect x="19.3" y="17.2" width="3.1" height="2.0" fill="#1888E0"/><rect x="19.3" y="21.3" width="3.1" height="2.0" fill="#1888E0"/><rect x="19.3" y="25.5" width="3.1" height="2.0" fill="#1888E0"/><rect x="19.3" y="29.6" width="3.1" height="2.0" fill="#1888E0"/><rect x="19.3" y="33.8" width="3.1" height="2.0" fill="#1888E0"/><rect x="19.3" y="37.9" width="3.1" height="2.0" fill="#1888E0"/><rect x="19.3" y="42.1" width="3.1" height="2.0" fill="#1888E0"/><path d="M5.600 41.200h8l-1.600 1.800h-5z" fill="#8C9498"/></svg>
<span class="t" style="left:260.84px;top:76px;font-size:16px;line-height:20px;transform:scaleX(1.126);color:#0A246A;text-shadow:1px 1px 0 rgba(255,255,255,.55);">Accommodation Search Results</span>
<span class="t" style="left:260.68px;top:96px;font-size:16px;line-height:20px;transform:scaleX(1.124);color:#0A246A;text-shadow:1px 1px 0 rgba(255,255,255,.55);">For pax: 2A, 1C, 0I</span>
<span class="t" style="left:1235.93px;top:101px;transform:scaleX(1.010);color:#848284;text-shadow:1px 1px 0 #fff;">More</span>
<span class="t" style="left:1270.86px;top:101px;transform:scaleX(1.035);color:#848284;text-shadow:1px 1px 0 #fff;">Stop</span>
<span class="t" style="left:1304.00px;top:101px;transform:scaleX(0.959);">Facilities Filter</span>
<span class="t" style="left:1388.95px;top:101px;">Basket</span>
<span class="t" style="left:1432.96px;top:101px;transform:scaleX(0.982);">Nett Price</span>
<span class="t" style="left:1498.94px;top:101px;">Navigate</span>
<span class="t" style="left:1552.97px;top:101px;transform:scaleX(0.936);">Close</span>
<div style="left:1381px;top:82px;width:1px;height:32px;background:#848284;"></div>
<div style="left:1382px;top:82px;width:1px;height:32px;background:#fff;"></div>
<div style="left:1490px;top:82px;width:1px;height:32px;background:#848284;"></div>
<div style="left:1491px;top:82px;width:1px;height:32px;background:#fff;"></div>
<svg style="left:1244px;top:86px;" width="10" height="9" viewBox="0 0 10 9"><path d="M0 0h10v1.500L5.500 9h-1L0 1.500z" fill="#848284"/><rect x="6" y="1" width="1" height="1" fill="#D8D4CC"/></svg>
<svg style="left:1278px;top:86px;" width="8" height="8" viewBox="0 0 8 8"><rect width="8" height="8" fill="#848284"/><path d="M1 1h1.500v1H2v1H1z" fill="#E8E4DC"/></svg>
<svg style="left:1333px;top:83px;" width="12" height="16" viewBox="0 0 12 16"><defs><linearGradient id="gfn" x1="0" y1="0" x2="1" y2="0"><stop offset="0" stop-color="#C8C8C8"/><stop offset=".4" stop-color="#F8F8F8"/><stop offset="1" stop-color="#A0A0A0"/></linearGradient></defs>
<path d="M.3 3.200C1 1 3.400.2 6 .2s5 .8 5.700 3L6.800 11v4.400H5.200V11z" fill="url(#gfn)"/>
<ellipse cx="6" cy="3" rx="5.300" ry="2.400" fill="#B4B4B4" stroke="#D8D8D8" stroke-width=".8"/>
<ellipse cx="6.300" cy="3.300" rx="3" ry="1.400" fill="#9C9C9C"/></svg>
<svg style="left:1399px;top:83px;" width="16" height="16" viewBox="0 0 16 16"><path d="M10.500 4.500V1.500h4" stroke="#777" stroke-width="1" fill="none"/>
<path d="M.5 2.500h13v6H3z" fill="none" stroke="#777" stroke-width="1"/>
<path d="M3.500 3v5M5.500 3v5M7.500 3v5M9.500 3v5M11.500 3v5" stroke="#777" stroke-width="1"/>
<path d="M10.500 8.500l-1.500 3" stroke="#558" stroke-width="1" fill="none"/>
<path d="M3.500 13.500h5" stroke="#888" stroke-width="1"/>
<circle cx="2.500" cy="13.500" r="1.700" fill="#fff" stroke="#F00" stroke-width="1.200"/>
<circle cx="8.500" cy="13.500" r="1.700" fill="#fff" stroke="#F00" stroke-width="1.200"/></svg>
<svg style="left:1450px;top:83px;" width="16" height="16" viewBox="0 0 16 16"><path d="M1.400 3.400C2 1.400 4 .2 6.400.2s4.400 1 5 2.800l-1.600 2.400-3 2.400 1 2.600-1.600 1.400-2-1.400.4-1.600-3.800.2 1.800-1.400C1.400 6.600 1 5 1.400 3.400z" fill="#7CB018"/>
<path d="M3 3.600c1-1.400 3.200-2 5-1.200" stroke="#C0E080" stroke-width="1" fill="none"/>
<rect x="1.200" y="10.200" width="4" height="3" fill="#F01020"/>
<path d="M2 11.700h1.800" stroke="#FFD0D0" stroke-width=".9"/>
<circle cx="7.600" cy="7.800" r="2.400" fill="#F01020"/>
<circle cx="13.400" cy="12.600" r="2.600" fill="#F01020"/>
<path d="M13 5.600L7.600 15" stroke="#F01020" stroke-width="2.600"/>
<path d="M6.600 15h9" stroke="#F01020" stroke-width="1.200"/></svg>
<svg style="left:1514px;top:83px;" width="16" height="16" viewBox="0 0 16 16"><circle cx="8.700" cy="8" r="6.200" fill="#F4F8FA" stroke="#3C7CC0" stroke-width="1.300"/>
<path d="M3.400 10.800a6 6 0 0 0 9.400 2.400" stroke="#40D8F0" stroke-width="1.600" fill="none"/>
<path d="M4.800 4.400l5 3.200-1.800 1.800z" fill="#1898F0"/>
<path d="M12.800 11.800L8 9.400l1.800-1.800z" fill="#F01810"/>
<path d="M.6 2.200l2-1.800 1.800 2-2 1.800z" fill="#8A5A20"/>
<path d="M12.600 13.600l2-1.800 1.800 2-2 1.800z" fill="#8A5A20"/>
<path d="M2.600 2.600l1.600 1.400M13 12.400l1 1" stroke="#5A3A10" stroke-width="1"/></svg>
<svg style="left:1561.5px;top:85px;" width="12" height="12" viewBox="0 0 12 12"><defs><linearGradient id="grx" x1="0" y1="0" x2="0" y2="1"><stop offset="0" stop-color="#F86070"/><stop offset=".5" stop-color="#F03850"/><stop offset="1" stop-color="#D82038"/></linearGradient></defs>
<path d="M2.400.2L6 3.800 9.600.2l2.200 2.200L8.200 6l3.600 3.600-2.200 2.200L6 8.200l-3.600 3.600L.2 9.600 3.800 6 .2 2.400z" fill="url(#grx)" stroke="#D02038" stroke-width=".6" stroke-linejoin="round"/></svg>
<span class="t" style="left:203.72px;top:136px;font-weight:bold;transform:scaleX(1.058);">Search results: </span>
<span class="t" style="left:290.75px;top:136px;font-weight:bold;transform:scaleX(1.233);">13/13</span>
<div style="left:204px;top:151px;width:1387px;height:607px;background:#fff;box-shadow:inset 1px 1px 0 #848284,inset -1px -1px 0 #fff,inset 2px 2px 0 #424142,inset -2px -2px 0 #D6D3CE;"></div>
<div style="left:206px;top:153px;width:1383px;height:19px;background:#D6D3CE;box-shadow:inset 0 2px 0 #fff,inset 0 -1px 0 #7B796B,inset 0 -2px 0 #ADAA9C;"></div>
<div style="left:280px;top:155px;width:1px;height:15px;background:#B5B2A5;"></div>
<div style="left:281px;top:154px;width:1px;height:18px;background:#6B6963;"></div>
<div style="left:282px;top:154px;width:1px;height:17px;background:#fff;"></div>
<span class="t" style="left:207.95px;top:157px;transform:scaleX(1.004);">Resort</span>
<div style="left:400px;top:155px;width:1px;height:15px;background:#B5B2A5;"></div>
<div style="left:401px;top:154px;width:1px;height:18px;background:#6B6963;"></div>
<div style="left:402px;top:154px;width:1px;height:17px;background:#fff;"></div>
<span class="t" style="left:283.84px;top:157px;transform:scaleX(0.959);">Accommodation</span>
<div style="left:440px;top:155px;width:1px;height:15px;background:#B5B2A5;"></div>
<div style="left:441px;top:154px;width:1px;height:18px;background:#6B6963;"></div>
<div style="left:442px;top:154px;width:1px;height:17px;background:#fff;"></div>
<span class="t" style="left:402.89px;top:157px;transform:scaleX(1.060);">Rati…</span>
<div style="left:515px;top:155px;width:1px;height:15px;background:#B5B2A5;"></div>
<div style="left:516px;top:154px;width:1px;height:18px;background:#6B6963;"></div>
<div style="left:517px;top:154px;width:1px;height:17px;background:#fff;"></div>
<span class="t" style="left:442.97px;top:157px;transform:scaleX(0.989);">Board</span>
<div style="left:605px;top:155px;width:1px;height:15px;background:#B5B2A5;"></div>
<div style="left:606px;top:154px;width:1px;height:18px;background:#6B6963;"></div>
<div style="left:607px;top:154px;width:1px;height:17px;background:#fff;"></div>
<span class="t" style="left:517.95px;top:157px;transform:scaleX(1.004);">Room type</span>
<div style="left:640px;top:155px;width:1px;height:15px;background:#B5B2A5;"></div>
<div style="left:641px;top:154px;width:1px;height:18px;background:#6B6963;"></div>
<div style="left:642px;top:154px;width:1px;height:17px;background:#fff;"></div>
<span class="t" style="left:607.99px;top:157px;transform:scaleX(0.950);">DOW</span>
<div style="left:708px;top:155px;width:1px;height:15px;background:#B5B2A5;"></div>
<div style="left:709px;top:154px;width:1px;height:18px;background:#6B6963;"></div>
<div style="left:710px;top:154px;width:1px;height:17px;background:#fff;"></div>
<span class="t" style="left:642.89px;top:157px;transform:scaleX(1.006);">Check In</span>
<div style="left:743px;top:155px;width:1px;height:15px;background:#B5B2A5;"></div>
<div style="left:744px;top:154px;width:1px;height:18px;background:#6B6963;"></div>
<div style="left:745px;top:154px;width:1px;height:17px;background:#fff;"></div>
<span class="t" style="left:710.99px;top:157px;transform:scaleX(0.950);">DOW</span>
<div style="left:811px;top:155px;width:1px;height:15px;background:#B5B2A5;"></div>
<div style="left:812px;top:154px;width:1px;height:18px;background:#6B6963;"></div>
<div style="left:813px;top:154px;width:1px;height:17px;background:#fff;"></div>
<span class="t" style="left:745.93px;top:157px;transform:scaleX(0.975);">Check Out</span>
<div style="left:873px;top:155px;width:1px;height:15px;background:#B5B2A5;"></div>
<div style="left:874px;top:154px;width:1px;height:18px;background:#6B6963;"></div>
<div style="left:875px;top:154px;width:1px;height:17px;background:#fff;"></div>
<span class="t" style="left:813.93px;top:157px;transform:scaleX(0.967);">Supplier</span>
<div style="left:898px;top:155px;width:1px;height:15px;background:#B5B2A5;"></div>
<div style="left:899px;top:154px;width:1px;height:18px;background:#6B6963;"></div>
<div style="left:900px;top:154px;width:1px;height:17px;background:#fff;"></div>
<span class="t" style="left:880.93px;top:157px;transform:scaleX(1.026);">Er</span>
<div style="left:923px;top:155px;width:1px;height:15px;background:#B5B2A5;"></div>
<div style="left:924px;top:154px;width:1px;height:18px;background:#6B6963;"></div>
<div style="left:925px;top:154px;width:1px;height:17px;background:#fff;"></div>
<span class="t" style="left:904.76px;top:157px;transform:scaleX(0.940);">NR</span>
<div style="left:948px;top:155px;width:1px;height:15px;background:#B5B2A5;"></div>
<div style="left:949px;top:154px;width:1px;height:18px;background:#6B6963;"></div>
<div style="left:950px;top:154px;width:1px;height:17px;background:#fff;"></div>
<span class="t" style="left:929.01px;top:157px;transform:scaleX(0.943);">MS</span>
<div style="left:1003px;top:155px;width:1px;height:15px;background:#B5B2A5;"></div>
<div style="left:1004px;top:154px;width:1px;height:18px;background:#6B6963;"></div>
<div style="left:1005px;top:154px;width:1px;height:17px;background:#fff;"></div>
<span class="t" style="left:976.99px;top:157px;transform:scaleX(0.968);">Price</span>
<div style="left:1058px;top:155px;width:1px;height:15px;background:#B5B2A5;"></div>
<div style="left:1059px;top:154px;width:1px;height:18px;background:#6B6963;"></div>
<div style="left:1060px;top:154px;width:1px;height:17px;background:#fff;"></div>
<span class="t" style="left:1010.92px;top:157px;transform:scaleX(0.964);">Incl.Fl.PP</span>
<div style="left:1123px;top:155px;width:1px;height:15px;background:#B5B2A5;"></div>
<div style="left:1124px;top:154px;width:1px;height:18px;background:#6B6963;"></div>
<div style="left:1125px;top:154px;width:1px;height:17px;background:#fff;"></div>
<span class="t" style="left:1081.98px;top:157px;transform:scaleX(0.972);">Basket</span>
<div style="left:1178px;top:155px;width:1px;height:15px;background:#B5B2A5;"></div>
<div style="left:1179px;top:154px;width:1px;height:18px;background:#6B6963;"></div>
<div style="left:1180px;top:154px;width:1px;height:17px;background:#fff;"></div>
<span class="t" style="left:1134.98px;top:157px;transform:scaleX(0.959);">Discount</span>
<div style="left:1203px;top:155px;width:1px;height:15px;background:#B5B2A5;"></div>
<div style="left:1204px;top:154px;width:1px;height:18px;background:#6B6963;"></div>
<div style="left:1205px;top:154px;width:1px;height:17px;background:#fff;"></div>
<span class="t" style="left:1185.61px;top:157px;transform:scaleX(1.033);">Of</span>
<div style="left:1263px;top:155px;width:1px;height:15px;background:#B5B2A5;"></div>
<div style="left:1264px;top:154px;width:1px;height:18px;background:#6B6963;"></div>
<div style="left:1265px;top:154px;width:1px;height:17px;background:#fff;"></div>
<span class="t" style="left:1205.85px;top:157px;transform:scaleX(1.041);">Contract</span>
<div style="left:1338px;top:155px;width:1px;height:15px;background:#B5B2A5;"></div>
<div style="left:1339px;top:154px;width:1px;height:18px;background:#6B6963;"></div>
<div style="left:1340px;top:154px;width:1px;height:17px;background:#fff;"></div>
<span class="t" style="left:1266.84px;top:157px;transform:scaleX(0.980);">Act. Supplier</span>
<div style="left:206px;top:154px;width:2px;height:16px;background:#fff;"></div>
<svg style="left:386px;top:156px;" width="14" height="13" viewBox="0 0 14 13"><defs><linearGradient id="gflt" x1="0" y1="0" x2="1" y2="0"><stop offset="0" stop-color="#fff"/><stop offset=".55" stop-color="#D8E4F4"/><stop offset="1" stop-color="#88A0C8"/></linearGradient></defs><path d="M.800 1.500h12.400L8 7v4.500H6V7z" fill="url(#gflt)" stroke="#000" stroke-width="1" stroke-linejoin="miter"/></svg>
<svg style="left:1115px;top:160px;" width="8" height="5" viewBox="0 0 8 5"><path d="M0 0h8l-4 4.500z" fill="#A5A29C"/></svg>
<div style="left:207px;top:172px;width:1133px;height:195px;background:#BDDFFF;"></div>
<div style="left:207px;top:172px;width:1381px;height:15px;background:#08246B;"></div>
<div style="left:207px;top:201px;width:1381px;height:1px;background:#D6D3CE;"></div>
<div style="left:207px;top:216px;width:1381px;height:1px;background:#D6D3CE;"></div>
<div style="left:207px;top:231px;width:1381px;height:1px;background:#D6D3CE;"></div>
<div style="left:207px;top:246px;width:1381px;height:1px;background:#D6D3CE;"></div>
<div style="left:207px;top:261px;width:1381px;height:1px;background:#D6D3CE;"></div>
<div style="left:207px;top:276px;width:1381px;height:1px;background:#D6D3CE;"></div>
<div style="left:207px;top:291px;width:1381px;height:1px;background:#D6D3CE;"></div>
<div style="left:207px;top:306px;width:1381px;height:1px;background:#D6D3CE;"></div>
<div style="left:207px;top:321px;width:1381px;height:1px;background:#D6D3CE;"></div>
<div style="left:207px;top:336px;width:1381px;height:1px;background:#D6D3CE;"></div>
<div style="left:207px;top:351px;width:1381px;height:1px;background:#D6D3CE;"></div>
<div style="left:207px;top:366px;width:1381px;height:1px;background:#D6D3CE;"></div>
<div style="left:281px;top:187px;width:1px;height:180px;background:#D6D3CE;"></div>
<div style="left:401px;top:187px;width:1px;height:180px;background:#D6D3CE;"></div>
<div style="left:441px;top:187px;width:1px;height:180px;background:#D6D3CE;"></div>
<div style="left:516px;top:187px;width:1px;height:180px;background:#D6D3CE;"></div>
<div style="left:606px;top:187px;width:1px;height:180px;background:#D6D3CE;"></div>
<div style="left:641px;top:187px;width:1px;height:180px;background:#D6D3CE;"></div>
<div style="left:709px;top:187px;width:1px;height:180px;background:#D6D3CE;"></div>
<div style="left:744px;top:187px;width:1px;height:180px;background:#D6D3CE;"></div>
<div style="left:812px;top:187px;width:1px;height:180px;background:#D6D3CE;"></div>
<div style="left:874px;top:187px;width:1px;height:180px;background:#D6D3CE;"></div>
<div style="left:899px;top:187px;width:1px;height:180px;background:#D6D3CE;"></div>
<div style="left:924px;top:187px;width:1px;height:180px;background:#D6D3CE;"></div>
<div style="left:949px;top:187px;width:1px;height:180px;background:#D6D3CE;"></div>
<div style="left:1004px;top:187px;width:1px;height:180px;background:#D6D3CE;"></div>
<div style="left:1059px;top:187px;width:1px;height:180px;background:#D6D3CE;"></div>
<div style="left:1124px;top:187px;width:1px;height:180px;background:#D6D3CE;"></div>
<div style="left:1179px;top:187px;width:1px;height:180px;background:#D6D3CE;"></div>
<div style="left:1204px;top:187px;width:1px;height:180px;background:#D6D3CE;"></div>
<div style="left:1264px;top:187px;width:1px;height:180px;background:#D6D3CE;"></div>
<div style="left:1339px;top:187px;width:1px;height:180px;background:#D6D3CE;"></div>
<span class="t" style="left:207.81px;top:173px;transform:scaleX(1.063);color:#fff;">Internation…</span>
<span class="t" style="left:283.01px;top:173px;transform:scaleX(0.945);color:#fff;">Rosen Plaza</span>
<span class="t" style="left:402.77px;top:173px;transform:scaleX(1.092);color:#fff;">3.5</span>
<span class="t" style="left:443.00px;top:173px;transform:scaleX(0.957);color:#fff;">Room Only</span>
<span class="t" style="left:517.92px;top:173px;transform:scaleX(0.978);color:#fff;">Standard Room</span>
<span class="t" style="left:607.84px;top:173px;transform:scaleX(1.114);color:#fff;">Fri</span>
<span class="t" style="left:642.92px;top:173px;transform:scaleX(1.041);color:#fff;">23/12/2016</span>
<span class="t" style="left:710.84px;top:173px;transform:scaleX(1.114);color:#fff;">Fri</span>
<span class="t" style="left:745.83px;top:173px;transform:scaleX(1.043);color:#fff;">30/12/2016</span>
<span class="t" style="left:813.88px;top:173px;transform:scaleX(1.015);color:#fff;">Ocean B…</span>
<span class="t" style="left:967.93px;top:173px;transform:scaleX(1.006);color:#fff;">579.13</span>
<span class="t" style="left:1022.85px;top:173px;transform:scaleX(1.005);color:#fff;">193.04</span>
<span class="t" style="left:1087.93px;top:173px;transform:scaleX(1.006);color:#fff;">579.13</span>
<span class="t" style="left:1155.74px;top:173px;transform:scaleX(0.971);color:#fff;">0.00</span>
<span class="t" style="left:1206.00px;top:173px;transform:scaleX(0.891);color:#fff;">XML</span>
<span class="t" style="left:207.85px;top:188px;transform:scaleX(1.043);">Orlando Int…</span>
<span class="t" style="left:283.00px;top:188px;transform:scaleX(0.959);">Rosen Plaza Hotel</span>
<span class="t" style="left:403.83px;top:188px;transform:scaleX(1.020);">4.5</span>
<span class="t" style="left:443.00px;top:188px;transform:scaleX(0.957);">Room Only</span>
<span class="t" style="left:517.92px;top:188px;transform:scaleX(0.978);">Standard Room</span>
<span class="t" style="left:607.84px;top:188px;transform:scaleX(1.114);">Fri</span>
<span class="t" style="left:642.92px;top:188px;transform:scaleX(1.041);">23/12/2016</span>
<span class="t" style="left:710.84px;top:188px;transform:scaleX(1.114);">Fri</span>
<span class="t" style="left:745.83px;top:188px;transform:scaleX(1.043);">30/12/2016</span>
<span class="t" style="left:813.90px;top:188px;transform:scaleX(1.004);">Get A Bed</span>
<span class="t" style="left:967.91px;top:188px;transform:scaleX(1.007);">614.42</span>
<span class="t" style="left:1022.96px;top:188px;transform:scaleX(1.005);">204.81</span>
<span class="t" style="left:1087.91px;top:188px;transform:scaleX(1.007);">614.42</span>
<span class="t" style="left:1155.74px;top:188px;transform:scaleX(0.971);">0.00</span>
<span class="t" style="left:1206.00px;top:188px;transform:scaleX(0.891);">XML</span>
<span class="t" style="left:207.81px;top:203px;transform:scaleX(1.063);">Internation…</span>
<span class="t" style="left:283.00px;top:203px;transform:scaleX(0.958);">Rosen Shingle Creek</span>
<span class="t" style="left:403.83px;top:203px;transform:scaleX(1.021);">4.0</span>
<span class="t" style="left:443.00px;top:203px;transform:scaleX(0.957);">Room Only</span>
<span class="t" style="left:517.88px;top:203px;transform:scaleX(1.011);">Standard Roo…</span>
<span class="t" style="left:607.84px;top:203px;transform:scaleX(1.114);">Fri</span>
<span class="t" style="left:642.92px;top:203px;transform:scaleX(1.041);">23/12/2016</span>
<span class="t" style="left:710.84px;top:203px;transform:scaleX(1.114);">Fri</span>
<span class="t" style="left:745.83px;top:203px;transform:scaleX(1.043);">30/12/2016</span>
<span class="t" style="left:813.88px;top:203px;transform:scaleX(1.015);">Ocean B…</span>
<span class="t" style="left:883.65px;top:203px;transform:scaleX(1.400);">*</span>
<span class="t" style="left:967.87px;top:203px;transform:scaleX(1.008);">773.91</span>
<span class="t" style="left:1022.96px;top:203px;">257.97</span>
<span class="t" style="left:1087.87px;top:203px;transform:scaleX(1.008);">773.91</span>
<span class="t" style="left:1155.74px;top:203px;transform:scaleX(0.971);">0.00</span>
<span class="t" style="left:1206.00px;top:203px;transform:scaleX(0.891);">XML</span>
<span class="t" style="left:207.85px;top:218px;transform:scaleX(1.043);">Orlando Int…</span>
<span class="t" style="left:283.00px;top:218px;transform:scaleX(0.958);">Rosen Shingle Creek</span>
<span class="t" style="left:403.83px;top:218px;transform:scaleX(1.021);">4.0</span>
<span class="t" style="left:443.00px;top:218px;transform:scaleX(0.957);">Room Only</span>
<span class="t" style="left:517.88px;top:218px;transform:scaleX(1.011);">Standard Roo…</span>
<span class="t" style="left:607.84px;top:218px;transform:scaleX(1.114);">Fri</span>
<span class="t" style="left:642.92px;top:218px;transform:scaleX(1.041);">23/12/2016</span>
<span class="t" style="left:710.84px;top:218px;transform:scaleX(1.114);">Fri</span>
<span class="t" style="left:745.83px;top:218px;transform:scaleX(1.043);">30/12/2016</span>
<span class="t" style="left:813.90px;top:218px;transform:scaleX(1.004);">Get A Bed</span>
<span class="t" style="left:967.86px;top:218px;transform:scaleX(1.004);">823.14</span>
<span class="t" style="left:1022.96px;top:218px;transform:scaleX(1.005);">274.38</span>
<span class="t" style="left:1087.86px;top:218px;transform:scaleX(1.004);">823.14</span>
<span class="t" style="left:1155.74px;top:218px;transform:scaleX(0.971);">0.00</span>
<span class="t" style="left:1206.00px;top:218px;transform:scaleX(0.891);">XML</span>
<span class="t" style="left:207.81px;top:233px;transform:scaleX(1.063);">Internation…</span>
<span class="t" style="left:283.00px;top:233px;transform:scaleX(0.958);">Rosen Shingle Creek</span>
<span class="t" style="left:403.83px;top:233px;transform:scaleX(1.021);">4.0</span>
<span class="t" style="left:443.00px;top:233px;transform:scaleX(0.957);">Room Only</span>
<span class="t" style="left:517.92px;top:233px;transform:scaleX(0.978);">Standard Room</span>
<span class="t" style="left:607.84px;top:233px;transform:scaleX(1.114);">Fri</span>
<span class="t" style="left:642.92px;top:233px;transform:scaleX(1.041);">23/12/2016</span>
<span class="t" style="left:710.84px;top:233px;transform:scaleX(1.114);">Fri</span>
<span class="t" style="left:745.83px;top:233px;transform:scaleX(1.043);">30/12/2016</span>
<span class="t" style="left:813.88px;top:233px;transform:scaleX(1.015);">Ocean B…</span>
<span class="t" style="left:883.65px;top:233px;transform:scaleX(1.400);">*</span>
<span class="t" style="left:967.86px;top:233px;transform:scaleX(1.008);">846.96</span>
<span class="t" style="left:1022.96px;top:233px;transform:scaleX(1.005);">282.32</span>
<span class="t" style="left:1087.86px;top:233px;transform:scaleX(1.008);">846.96</span>
<span class="t" style="left:1155.74px;top:233px;transform:scaleX(0.971);">0.00</span>
<span class="t" style="left:1206.00px;top:233px;transform:scaleX(0.891);">XML</span>
<span class="t" style="left:207.85px;top:248px;transform:scaleX(1.043);">Orlando Int…</span>
<span class="t" style="left:283.00px;top:248px;transform:scaleX(0.959);">Rosen Plaza Hotel</span>
<span class="t" style="left:403.83px;top:248px;transform:scaleX(1.020);">4.5</span>
<span class="t" style="left:442.89px;top:248px;transform:scaleX(1.059);">Buffet Brea…</span>
<span class="t" style="left:517.92px;top:248px;transform:scaleX(0.978);">Standard Room</span>
<span class="t" style="left:607.84px;top:248px;transform:scaleX(1.114);">Fri</span>
<span class="t" style="left:642.92px;top:248px;transform:scaleX(1.041);">23/12/2016</span>
<span class="t" style="left:710.84px;top:248px;transform:scaleX(1.114);">Fri</span>
<span class="t" style="left:745.83px;top:248px;transform:scaleX(1.043);">30/12/2016</span>
<span class="t" style="left:813.90px;top:248px;transform:scaleX(1.004);">Get A Bed</span>
<span class="t" style="left:967.85px;top:248px;transform:scaleX(1.009);">893.40</span>
<span class="t" style="left:1022.96px;top:248px;transform:scaleX(1.006);">297.80</span>
<span class="t" style="left:1087.85px;top:248px;transform:scaleX(1.009);">893.40</span>
<span class="t" style="left:1155.74px;top:248px;transform:scaleX(0.971);">0.00</span>
<span class="t" style="left:1206.00px;top:248px;transform:scaleX(0.891);">XML</span>
<span class="t" style="left:207.81px;top:263px;transform:scaleX(1.063);">Internation…</span>
<span class="t" style="left:283.00px;top:263px;transform:scaleX(0.958);">Rosen Shingle Creek</span>
<span class="t" style="left:403.83px;top:263px;transform:scaleX(1.021);">4.0</span>
<span class="t" style="left:443.00px;top:263px;transform:scaleX(0.957);">Room Only</span>
<span class="t" style="left:517.88px;top:263px;transform:scaleX(1.011);">Standard Roo…</span>
<span class="t" style="left:607.84px;top:263px;transform:scaleX(1.114);">Fri</span>
<span class="t" style="left:642.92px;top:263px;transform:scaleX(1.041);">23/12/2016</span>
<span class="t" style="left:710.84px;top:263px;transform:scaleX(1.114);">Fri</span>
<span class="t" style="left:745.83px;top:263px;transform:scaleX(1.043);">30/12/2016</span>
<span class="t" style="left:813.88px;top:263px;transform:scaleX(1.015);">Ocean B…</span>
<span class="t" style="left:883.65px;top:263px;transform:scaleX(1.400);">*</span>
<span class="t" style="left:967.85px;top:263px;transform:scaleX(1.008);">956.52</span>
<span class="t" style="left:1022.87px;top:263px;transform:scaleX(1.004);">318.84</span>
<span class="t" style="left:1087.85px;top:263px;transform:scaleX(1.008);">956.52</span>
<span class="t" style="left:1155.74px;top:263px;transform:scaleX(0.971);">0.00</span>
<span class="t" style="left:1206.00px;top:263px;transform:scaleX(0.891);">XML</span>
<span class="t" style="left:207.81px;top:278px;transform:scaleX(1.063);">Internation…</span>
<span class="t" style="left:283.00px;top:278px;transform:scaleX(0.958);">Rosen Shingle Creek</span>
<span class="t" style="left:403.83px;top:278px;transform:scaleX(1.021);">4.0</span>
<span class="t" style="left:443.00px;top:278px;transform:scaleX(0.957);">Room Only</span>
<span class="t" style="left:517.88px;top:278px;transform:scaleX(1.011);">Standard Roo…</span>
<span class="t" style="left:607.84px;top:278px;transform:scaleX(1.114);">Fri</span>
<span class="t" style="left:642.92px;top:278px;transform:scaleX(1.041);">23/12/2016</span>
<span class="t" style="left:710.84px;top:278px;transform:scaleX(1.114);">Fri</span>
<span class="t" style="left:745.83px;top:278px;transform:scaleX(1.043);">30/12/2016</span>
<span class="t" style="left:813.88px;top:278px;transform:scaleX(1.015);">Ocean B…</span>
<span class="t" style="left:883.65px;top:278px;transform:scaleX(1.400);">*</span>
<span class="t" style="left:958.85px;top:278px;transform:scaleX(1.006);">1,025.22</span>
<span class="t" style="left:1022.87px;top:278px;transform:scaleX(1.004);">341.74</span>
<span class="t" style="left:1078.85px;top:278px;transform:scaleX(1.006);">1,025.22</span>
<span class="t" style="left:1155.74px;top:278px;transform:scaleX(0.971);">0.00</span>
<span class="t" style="left:1206.00px;top:278px;transform:scaleX(0.891);">XML</span>
<span class="t" style="left:207.81px;top:293px;transform:scaleX(1.063);">Internation…</span>
<span class="t" style="left:283.00px;top:293px;transform:scaleX(0.958);">Rosen Shingle Creek</span>
<span class="t" style="left:403.82px;top:293px;transform:scaleX(1.122);">4.5*</span>
<span class="t" style="left:442.93px;top:293px;transform:scaleX(1.026);">Breakfast B…</span>
<span class="t" style="left:517.94px;top:293px;transform:scaleX(0.992);">Deluxe</span>
<span class="t" style="left:607.84px;top:293px;transform:scaleX(1.114);">Fri</span>
<span class="t" style="left:642.92px;top:293px;transform:scaleX(1.041);">23/12/2016</span>
<span class="t" style="left:710.84px;top:293px;transform:scaleX(1.114);">Fri</span>
<span class="t" style="left:745.83px;top:293px;transform:scaleX(1.043);">30/12/2016</span>
<span class="t" style="left:813.74px;top:293px;transform:scaleX(1.039);">Tourico …</span>
<span class="t" style="left:958.85px;top:293px;transform:scaleX(1.007);">1,081.68</span>
<span class="t" style="left:1022.87px;top:293px;transform:scaleX(1.008);">360.56</span>
<span class="t" style="left:1078.85px;top:293px;transform:scaleX(1.007);">1,081.68</span>
<span class="t" style="left:1155.74px;top:293px;transform:scaleX(0.971);">0.00</span>
<span class="t" style="left:1206.00px;top:293px;transform:scaleX(0.891);">XML</span>
<span class="t" style="left:207.85px;top:308px;transform:scaleX(1.043);">Orlando Int…</span>
<span class="t" style="left:283.00px;top:308px;transform:scaleX(0.958);">Rosen Shingle Creek</span>
<span class="t" style="left:403.83px;top:308px;transform:scaleX(1.021);">4.0</span>
<span class="t" style="left:442.89px;top:308px;transform:scaleX(1.059);">Buffet Brea…</span>
<span class="t" style="left:517.88px;top:308px;transform:scaleX(1.011);">Standard Roo…</span>
<span class="t" style="left:607.84px;top:308px;transform:scaleX(1.114);">Fri</span>
<span class="t" style="left:642.92px;top:308px;transform:scaleX(1.041);">23/12/2016</span>
<span class="t" style="left:710.84px;top:308px;transform:scaleX(1.114);">Fri</span>
<span class="t" style="left:745.83px;top:308px;transform:scaleX(1.043);">30/12/2016</span>
<span class="t" style="left:813.90px;top:308px;transform:scaleX(1.004);">Get A Bed</span>
<span class="t" style="left:958.85px;top:308px;transform:scaleX(1.008);">1,110.85</span>
<span class="t" style="left:1022.87px;top:308px;transform:scaleX(1.008);">370.28</span>
<span class="t" style="left:1078.85px;top:308px;transform:scaleX(1.008);">1,110.85</span>
<span class="t" style="left:1155.74px;top:308px;transform:scaleX(0.971);">0.00</span>
<span class="t" style="left:1206.00px;top:308px;transform:scaleX(0.891);">XML</span>
<span class="t" style="left:207.85px;top:323px;transform:scaleX(1.043);">Orlando Int…</span>
<span class="t" style="left:283.00px;top:323px;transform:scaleX(0.958);">Rosen Shingle Creek</span>
<span class="t" style="left:403.83px;top:323px;transform:scaleX(1.021);">4.0</span>
<span class="t" style="left:443.00px;top:323px;transform:scaleX(0.957);">Room Only</span>
<span class="t" style="left:517.75px;top:323px;transform:scaleX(1.012);">Twin/double R…</span>
<span class="t" style="left:607.84px;top:323px;transform:scaleX(1.114);">Fri</span>
<span class="t" style="left:642.92px;top:323px;transform:scaleX(1.041);">23/12/2016</span>
<span class="t" style="left:710.84px;top:323px;transform:scaleX(1.114);">Fri</span>
<span class="t" style="left:745.83px;top:323px;transform:scaleX(1.043);">30/12/2016</span>
<span class="t" style="left:813.90px;top:323px;transform:scaleX(1.004);">Get A Bed</span>
<span class="t" style="left:958.85px;top:323px;transform:scaleX(1.006);">1,126.83</span>
<span class="t" style="left:1022.87px;top:323px;transform:scaleX(1.008);">375.61</span>
<span class="t" style="left:1078.85px;top:323px;transform:scaleX(1.006);">1,126.83</span>
<span class="t" style="left:1155.74px;top:323px;transform:scaleX(0.971);">0.00</span>
<span class="t" style="left:1206.00px;top:323px;transform:scaleX(0.891);">XML</span>
<span class="t" style="left:207.81px;top:338px;transform:scaleX(1.063);">Internation…</span>
<span class="t" style="left:283.00px;top:338px;transform:scaleX(0.958);">Rosen Shingle Creek</span>
<span class="t" style="left:403.82px;top:338px;transform:scaleX(1.122);">4.5*</span>
<span class="t" style="left:442.98px;top:338px;transform:scaleX(0.973);">Roomonly</span>
<span class="t" style="left:517.86px;top:338px;transform:scaleX(1.036);">Standard, Sta…</span>
<span class="t" style="left:607.84px;top:338px;transform:scaleX(1.114);">Fri</span>
<span class="t" style="left:642.92px;top:338px;transform:scaleX(1.041);">23/12/2016</span>
<span class="t" style="left:710.84px;top:338px;transform:scaleX(1.114);">Fri</span>
<span class="t" style="left:745.83px;top:338px;transform:scaleX(1.043);">30/12/2016</span>
<span class="t" style="left:813.74px;top:338px;transform:scaleX(1.039);">Tourico …</span>
<span class="t" style="left:958.88px;top:338px;transform:scaleX(0.986);">1,415.80</span>
<span class="t" style="left:1023.84px;top:338px;transform:scaleX(0.978);">471.93</span>
<span class="t" style="left:1078.88px;top:338px;transform:scaleX(0.986);">1,415.80</span>
<span class="t" style="left:1155.74px;top:338px;transform:scaleX(0.971);">0.00</span>
<span class="t" style="left:1206.00px;top:338px;transform:scaleX(0.891);">XML</span>
<span class="t" style="left:207.81px;top:353px;transform:scaleX(1.063);">Internation…</span>
<span class="t" style="left:283.00px;top:353px;transform:scaleX(0.958);">Rosen Shingle Creek</span>
<span class="t" style="left:403.82px;top:353px;transform:scaleX(1.122);">4.5*</span>
<span class="t" style="left:442.98px;top:353px;transform:scaleX(0.973);">Roomonly</span>
<span class="t" style="left:517.87px;top:353px;transform:scaleX(1.028);">Standard</span>
<span class="t" style="left:607.84px;top:353px;transform:scaleX(1.114);">Fri</span>
<span class="t" style="left:642.92px;top:353px;transform:scaleX(1.041);">23/12/2016</span>
<span class="t" style="left:710.84px;top:353px;transform:scaleX(1.114);">Fri</span>
<span class="t" style="left:745.83px;top:353px;transform:scaleX(1.043);">30/12/2016</span>
<span class="t" style="left:813.74px;top:353px;transform:scaleX(1.039);">Tourico …</span>
<span class="t" style="left:958.88px;top:353px;transform:scaleX(0.986);">1,510.20</span>
<span class="t" style="left:1022.93px;top:353px;transform:scaleX(1.007);">503.40</span>
<span class="t" style="left:1078.88px;top:353px;transform:scaleX(0.986);">1,510.20</span>
<span class="t" style="left:1155.74px;top:353px;transform:scaleX(0.971);">0.00</span>
<span class="t" style="left:1206.00px;top:353px;transform:scaleX(0.891);">XML</span>
<span class="t" style="left:208.95px;top:783px;transform:scaleX(1.005);">First portion: 8.5 sec, total search time: 15.0 sec</span>
<div style="left:1560px;top:778px;width:23px;height:22px;background:#D6D3CE;box-shadow:inset 1px 1px 0 #fff,inset -1px -1px 0 #424142,inset -2px -2px 0 #848284;"></div>
<span class="t" style="left:1567.98px;top:779px;font-size:16px;line-height:20px;font-weight:bold;color:#0050A0;font-family:'Liberation Serif',serif;">i</span>
<div style="left:202px;top:805px;width:1391px;height:1px;background:#848284;"></div>
<div style="left:296px;top:805px;width:83px;height:17px;background:#108200;clip-path:polygon(0 0,100% 0,100% 15px,81px 100%,2px 100%,0 15px);"></div>
<div style="left:295px;top:806px;width:1px;height:15px;background:#848284;"></div>
<div style="left:379px;top:806px;width:46px;height:17px;background:#CCFFC0;"></div>
<div style="left:426px;top:806px;width:62px;height:17px;background:#CCFFC0;"></div>
<div style="left:254px;top:806px;width:1px;height:17px;background:#848284;"></div>
<div style="left:425px;top:806px;width:1px;height:17px;background:#848284;"></div>
<div style="left:488px;top:806px;width:1px;height:17px;background:#848284;"></div>
<div style="left:584px;top:806px;width:1px;height:17px;background:#848284;"></div>
<span class="t" style="left:204.94px;top:808px;transform:scaleX(0.962);">Summary</span>
<span class="t" style="left:256.92px;top:808px;transform:scaleX(0.977);">Search</span>
<span class="t" style="left:298.85px;top:808px;transform:scaleX(0.947);color:#fff;">Acc 2A,1C MCO</span>
<span class="t" style="left:381.95px;top:808px;transform:scaleX(0.955);">Car TPA</span>
<span class="t" style="left:429.75px;top:808px;transform:scaleX(1.006);">Tour 2A,1C</span>
<span class="t" style="left:492.02px;top:808px;transform:scaleX(0.937);">Financial Summary</span>
<span class="t" style="left:775.87px;top:832px;transform:scaleX(1.007);">User: 263 - Anthony Lynch</span>
<span class="t" style="left:915.97px;top:832px;transform:scaleX(0.989);">Retailer: &#x27;Ocean-Florida&#x27;</span>
<span class="t" style="left:1041.90px;top:832px;">Client: none</span>
<span class="t" style="left:1539.94px;top:832px;transform:scaleX(0.932);">17:06 GMT</span>
<div style="left:0px;top:857px;width:1600px;height:1px;background:#fff;"></div>
</div>
</body>
</html>
